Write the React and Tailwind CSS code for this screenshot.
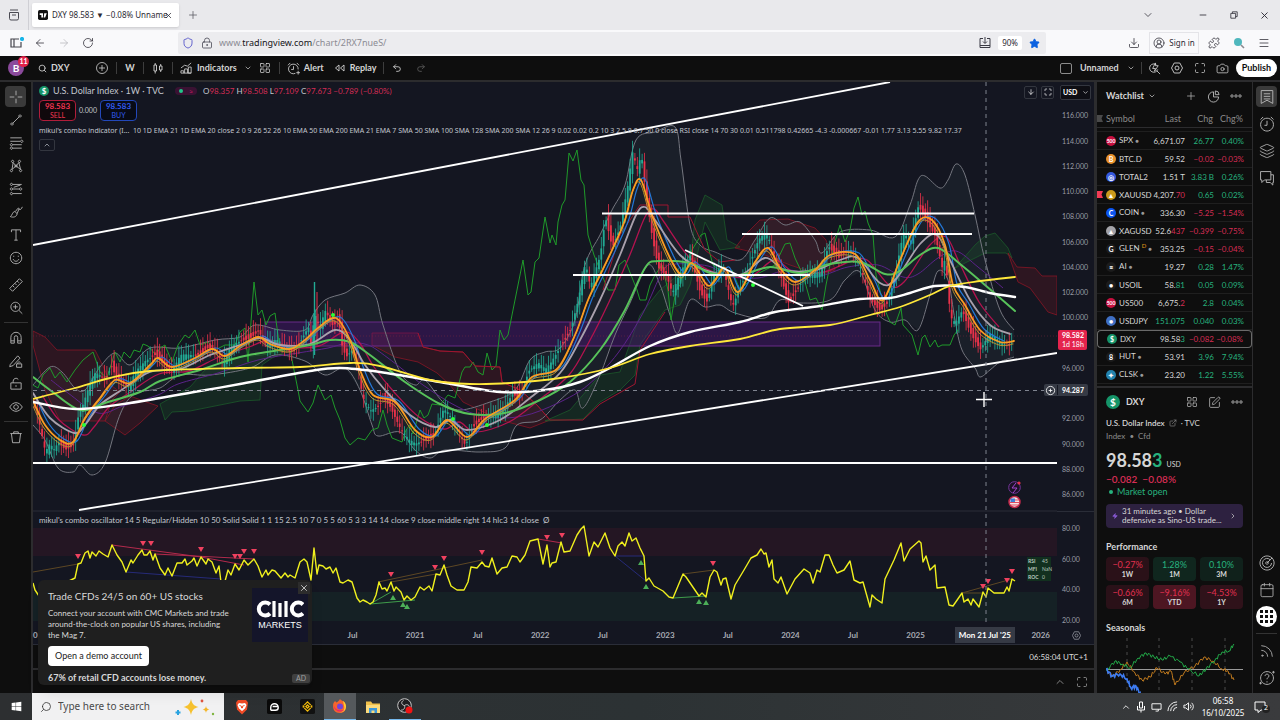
import {
  ArrowDown,
  ArrowLeft,
  ArrowRight,
  Calendar,
  Camera,
  ChevronDown,
  ChevronRight,
  ChevronUp,
  CircleUserRound,
  Download,
  ExternalLink,
  Layers,
  LayoutGrid,
  LockKeyhole,
  Maximize,
  Menu,
  Minus,
  Plus,
  Puzzle,
  Redo2,
  RotateCw,
  Rss,
  Search,
  Shield,
  SquarePen,
  Star,
  Undo2,
  X,
  Zap,
} from "lucide-react";
import { FaWindows } from "react-icons/fa";

const toPoints = (str) => str.split(" ").map((p) => p.split(",").map(Number));

const shift = (points, dx, dy) => points.map(([x, y]) => [x + dx, y + dy]);

// Catmull-Rom spline through the points
const smooth = (points) => {
  let d = `M${points[0][0]},${points[0][1]}`;
  for (let i = 0; i < points.length - 1; i++) {
    const p0 = points[i - 1] || points[i];
    const p1 = points[i];
    const p2 = points[i + 1];
    const p3 = points[i + 2] || p2;
    d += `C${p1[0] + (p2[0] - p0[0]) / 6},${p1[1] + (p2[1] - p0[1]) / 6} ${p2[0] - (p3[0] - p1[0]) / 6},${
      p2[1] - (p3[1] - p1[1]) / 6
    } ${p2[0]},${p2[1]}`;
  }
  return d;
};

const price = toPoints(
  "33,402 38,420 45,455 50,445 53,452 58,442 65,447 73,443 78,415 83,405 90,385 95,375 105,378 112,362 115,375 122,382 128,388 135,375 145,362 155,352 163,362 172,372 180,358 195,355 208,345 215,350 222,365 230,350 240,340 250,335 258,330 265,345 278,342 288,350 295,348 303,335 308,328 311,350 314,315 319,330 325,312 333,325 338,315 342,345 346,355 352,350 358,370 362,400 370,412 378,405 383,395 390,405 400,430 408,442 415,445 425,438 433,435 443,410 448,415 455,430 465,445 472,425 480,418 495,415 505,408 512,393 520,395 528,370 538,365 545,372 550,365 560,345 570,328 578,300 585,265 590,290 600,255 605,215 612,245 620,225 627,190 632,155 637,172 641,155 645,190 652,235 658,265 666,275 672,295 680,275 690,255 700,290 707,300 713,275 722,268 732,308 740,285 750,260 758,240 765,235 770,245 780,275 788,300 795,290 805,275 820,275 828,245 838,255 850,250 860,270 870,300 880,308 888,300 896,270 903,235 910,245 918,205 925,215 930,225 935,235 942,270 945,260 950,320 955,325 962,310 970,330 980,348 990,335 1000,345 1010,345 1014,332"
);

const white = toPoints(
  "33,402 76,409 130,403 200,391 240,384 310,371 340,368 380,372 440,382 500,392 545,390 580,382 610,368 650,346 690,332 740,322 775,312 820,306 860,299 890,298 910,293 935,286 965,287 990,293 1015,297"
);
const yellow = toPoints(
  "33,399 75,388 110,378 150,371 240,368 300,367 350,363 380,366 430,380 470,384 510,383 560,378 610,368 650,354 690,346 740,339 780,329 830,325 870,315 900,307 930,295 950,286 980,281 1015,277"
);
const green = toPoints(
  "33,377 50,390 80,410 105,403 140,392 160,381 200,370 240,357 280,350 310,345 330,340 350,342 370,355 405,382 440,404 470,414 505,413 540,400 570,382 600,350 625,310 645,268 658,261 690,263 710,273 740,275 770,267 800,273 830,264 860,262 885,274 900,271 920,255 938,248 960,264 985,285 1015,311"
);
const gray = toPoints(
  "33,393 50,418 74,433 85,425 100,405 120,391 150,372 180,369 210,355 240,345 260,338 280,345 310,344 335,330 350,340 365,365 385,390 410,415 435,427 450,420 467,430 500,420 530,398 560,373 580,340 600,300 620,255 636,215 645,207 655,220 680,255 705,270 740,275 765,258 785,270 815,270 840,260 858,258 880,283 895,280 920,244 937,235 950,260 970,300 990,325 1010,334"
);
const orange = toPoints(
  "33,401 45,425 60,440 73,442 85,418 100,398 115,380 130,383 150,365 158,358 172,367 195,358 212,349 225,356 240,346 258,337 270,344 290,349 305,340 318,328 336,318 350,340 360,370 373,395 395,402 415,430 432,437 447,420 467,437 485,419 515,400 532,377 557,369 575,335 588,300 600,275 612,250 625,220 633,190 641,180 652,215 670,258 682,275 692,263 707,285 715,280 725,268 738,292 755,262 768,248 780,268 795,282 815,270 830,255 855,254 870,280 883,300 900,260 918,222 932,220 945,245 953,285 965,305 980,330 1000,342 1014,341"
);
const bandTop = toPoints(
  "33,385 50,367 62,372 75,388 85,390 100,367 115,353 130,365 150,348 180,348 215,340 240,337 255,325 280,330 305,330 313,315 325,300 345,293 360,285 375,295 383,325 400,372 415,385 425,380 443,402 460,410 490,402 515,390 530,360 545,352 560,348 575,320 585,265 600,235 612,210 625,185 636,140 655,132 675,127 681,160 690,225 700,245 715,252 740,260 755,240 770,218 785,225 800,222 815,240 822,253 840,232 870,230 895,237 910,205 918,180 925,176 940,188 948,180 956,164 965,175 975,215 985,260 1000,310 1014,330"
);
const bandBottom = toPoints(
  "33,425 45,440 58,468 73,472 80,465 92,475 105,463 118,420 128,400 140,392 160,388 180,375 210,375 250,368 275,355 305,361 325,375 345,368 360,390 372,425 378,436 400,432 415,450 430,458 445,450 480,452 505,448 517,425 540,420 560,400 575,390 583,408 600,375 615,335 630,303 648,265 660,285 670,315 678,333 690,300 705,307 720,305 735,313 765,318 780,300 800,303 830,300 845,280 860,272 875,310 890,322 905,320 918,330 930,295 938,271 948,280 955,320 962,350 975,368 980,377 990,370 1000,362 1014,357"
);
const lagging =
  "33,385 38,388 43,375 50,368 55,378 60,372 67,382 75,370 83,360 93,352 100,372 107,378 115,352 120,362 124,352 130,358 134,350 140,352 143,344 148,346 156,355 160,348 165,345 172,362 178,345 185,335 189,338 195,330 200,345 208,342 215,350 225,345 235,345 240,332 245,328 248,362 254,282 258,315 262,310 266,325 270,316 275,313 280,350 290,350 298,390 300,401 308,412 313,403 318,385 325,400 331,395 335,408 340,420 345,438 350,445 358,438 365,440 372,430 378,428 383,410 387,425 392,438 402,442 406,430 410,425 413,434 420,410 424,418 428,415 432,404 440,405 448,395 455,398 462,372 465,367 470,367 473,362 478,372 483,375 487,353 492,370 496,366 500,330 504,340 508,335 515,300 523,260 528,295 531,292 535,262 539,258 545,217 550,243 552,235 556,245 558,222 562,205 565,200 569,153 573,161 577,150 581,180 584,185 588,235 594,255 600,270 608,290 615,290 619,265 625,260 637,290 640,300 646,300 650,285 655,275 662,265 668,290 671,320 676,290 680,285 686,262 692,250 701,235 705,233 709,250 713,265 725,275 732,270 740,290 755,275 775,265 785,244 790,243 795,258 803,275 810,300 816,298 822,310 826,285 830,265 834,245 840,225 845,242 850,230 854,208 858,197 862,215 865,211 868,223 873,235 876,275 885,310 890,322 895,325 901,308 903,325 912,335 918,355 922,338 925,335 930,347 935,340 938,347 942,345 950,345 954,335 958,330";

const oscillator =
  "33,583 35,590 39,596 75,578 78,564 81,563 85,553 88,551 90,558 92,552 96,556 99,551 103,554 108,557 112,545 117,555 122,562 126,572 131,560 133,563 138,555 142,550 144,555 147,555 150,551 153,560 155,554 160,568 165,575 168,568 172,576 177,563 182,563 185,559 187,565 192,561 194,558 197,566 201,557 206,564 208,559 212,562 216,573 219,566 221,582 224,585 228,570 231,575 235,564 239,570 244,560 248,565 254,559 258,566 262,577 266,570 268,575 272,570 275,571 281,578 285,573 288,577 290,575 295,578 300,562 304,559 307,562 311,580 314,548 317,574 319,565 323,566 326,569 330,567 333,573 336,568 340,582 343,583 348,580 352,582 357,598 360,602 363,600 367,602 370,604 373,602 376,595 379,582 382,589 385,588 387,591 391,582 394,591 396,587 401,592 404,600 407,596 411,600 415,597 420,587 424,590 429,586 432,591 436,574 440,575 444,565 447,575 451,586 457,590 464,590 468,582 471,567 477,568 482,562 485,566 489,567 492,558 497,574 502,568 507,567 512,556 517,557 520,562 525,555 530,541 538,539 543,564 547,545 550,567 552,563 556,562 561,542 564,552 570,551 577,535 581,529 584,526 589,556 594,542 598,547 605,533 610,548 615,556 618,546 622,542 625,546 629,533 632,541 636,538 640,548 644,556 646,581 649,578 654,586 663,591 669,597 673,598 683,574 686,577 699,596 702,593 706,597 710,577 714,570 717,572 721,585 723,579 726,578 731,599 735,585 744,570 751,558 757,555 761,549 764,554 766,553 769,567 772,560 774,579 778,583 781,577 787,594 795,579 804,569 810,573 813,583 817,570 820,572 825,555 829,555 833,565 837,573 844,570 850,561 854,580 860,583 863,582 870,607 872,595 876,599 882,603 885,579 894,560 901,543 904,561 910,549 919,541 921,543 923,562 926,556 930,570 935,565 937,588 945,587 949,605 953,606 962,593 964,602 968,599 971,605 973,599 979,607 983,592 986,597 988,588 994,593 1004,593 1007,587 1009,591 1012,579 1015,581";

const sellMarks = toPoints(
  "78,556 143,543 151,543 201,549 235,556 240,556 244,551 254,551 391,574 435,567 444,558 482,552 547,537 562,535 713,563 983,586 988,581 1007,580 1012,571"
);
const buyMarks = toPoints("393,598 403,605 407,607 641,563 646,587 699,602 706,603");

const priceAt = (x) => {
  const i = Math.max(1, price.findIndex((p) => p[0] >= x));
  const [x0, y0] = price[i - 1];
  const [x1, y1] = price[i];
  return y0 + ((y1 - y0) * (x - x0)) / (x1 - x0 || 1);
};

// Weekly candles around the price path
const candles = [];
for (let i = 0; i < 408; i++) {
  const x = 34.5 + i * 2.4;
  const noise = Math.sin(i * 12.9) * 5;
  const open = priceAt(x - 2.4 > 33 ? x - 2.4 : 33) + noise * 0.6;
  const close = priceAt(Math.min(x, 1013)) - noise * 0.6;
  const wick = 3 + Math.abs(Math.sin(i * 7.3)) * 9;
  candles.push({ x, open, close, high: Math.min(open, close) - wick, low: Math.max(open, close) + wick * 0.8 });
}

const clouds = [
  { up: false, d: "M33,331L45,337 57,350 95,350 103,366 112,386 120,392 112,400 105,421 60,421 45,390 33,345Z" },
  { up: false, d: "M105,421L125,435 140,423 158,406 152,404 130,396 115,405Z" },
  { up: true, d: "M160,404L190,387 205,370 230,358 262,355 290,350 272,358 262,365 260,400 240,401 190,411 172,412 165,420Z" },
  { up: false, d: "M372,333L418,333 423,347 440,351 463,352 475,366 500,367 502,382 520,390 537,405 550,420 530,428 500,420 463,402 450,385 437,373 418,362 395,357 372,345Z" },
  { up: true, d: "M545,421L570,410 600,375 620,372 640,315 660,290 690,265 695,220 705,195 722,205 727,240 740,247 720,250 705,222 690,285 680,305 665,310 640,345 635,375 620,390 600,402 583,419Z" },
  { up: false, d: "M735,248L745,235 760,220 788,219 815,228 826,240 835,270 820,275 790,265 765,255Z" },
  { up: true, d: "M955,268L975,245 985,236 995,233 1008,248 1012,258 1006,253 985,253Z" },
  { up: false, d: "M1008,253L1017,267 1035,268 1042,276 1057,276 1057,315 1048,312 1030,288 1018,282Z" },
];

const ChartCanvas = () => (
  <svg viewBox="33 82 1024 544" preserveAspectRatio="none" className="block h-full w-full">
    <rect x="33" y="528" width="1024" height="28" fill="#241623" />
    <rect x="33" y="592" width="1024" height="29" fill="#152125" />
    <path d="M33,511H1057" stroke="#2a2d38" />

    <path
      d={`${smooth(bandTop)}L${[...bandBottom].reverse().map((p) => p.join(",")).join(" ")}Z`}
      fill="#8fb7ab"
      fillOpacity=".06"
    />
    {clouds.map(({ up, d }) => (
      <path
        key={d}
        d={d}
        fill={up ? "#1b6b2b" : "#8a1626"}
        fillOpacity=".22"
        stroke={up ? "#1c5c2b" : "#8f1526"}
        strokeOpacity=".75"
      />
    ))}
    <rect x="265" y="322" width="615" height="24" fill="#5a1787" fillOpacity=".36" stroke="#692a88" />
    <path d="M33,336H1057" stroke="#7c2940" strokeDasharray="1 2" opacity=".5" />

    <g fill="none" strokeWidth="1">
      <path d={smooth(bandTop)} stroke="#74767f" />
      <path d={smooth(bandBottom)} stroke="#74767f" />
      <polyline points={lagging} stroke="#1f9a2a" strokeLinejoin="round" />
      <path d="M418,333L423,347 440,351 463,352 475,366 500,367 502,382 520,390 537,405 550,420H583L600,404 635,384 640,350 665,312" stroke="#9d1630" />
      <path d="M603,290L620,235 640,205H668V217H690L705,250 720,262 735,260" stroke="#9d1630" />
      <path d={smooth(shift(green, 18, 3).slice(0, -1))} stroke="#5b2389" />
      <path d={smooth(shift(gray, 9, 2).slice(0, -1))} stroke="#b3134f" strokeWidth="1.3" />
    </g>

    {candles.map((c) => {
      const color = c.close < c.open ? "#22ab94" : "#e8324a";
      return (
        <g key={c.x} fill={color}>
          <rect x={c.x} y={c.high} width=".8" height={c.low - c.high} />
          <rect
            x={c.x - 0.5}
            y={Math.min(c.open, c.close)}
            width="1.8"
            height={Math.max(1, Math.abs(c.close - c.open))}
          />
        </g>
      );
    })}
    <path d="M314.500,282V355" stroke="#22ab94" strokeWidth="1.400" />
    <path d="M317,292V345" stroke="#e8324a" />

    <g fill="none" strokeLinecap="round">
      <path d={smooth(shift(orange, 4, -1).slice(0, -1))} stroke="#2478d8" strokeWidth="1.2" />
      <path d={smooth(gray)} stroke="#a9a1ad" strokeWidth="1.800" />
      <path d={smooth(green)} stroke="#57c25a" strokeWidth="2" />
      <path d={smooth(shift(orange, -1, 3))} stroke="#b89330" strokeWidth="1" />
      <path d={smooth(orange)} stroke="#fb9c22" strokeWidth="1.800" />
      <path d={smooth(white)} stroke="#fff" strokeWidth="2.400" />
      <path d={smooth(yellow)} stroke="#ffe83b" strokeWidth="1.800" />
    </g>
    <g fill="#2bff3a">
      <circle cx="84" cy="425" r="2" />
      <circle cx="333" cy="315" r="2" />
      <circle cx="453" cy="419" r="2" />
      <circle cx="487" cy="425" r="2" />
      <circle cx="753" cy="285" r="2" />
    </g>

    <g stroke="#fff" strokeWidth="1.800" fill="none">
      <path d="M33,245L890,82" />
      <path d="M79,510L1057,353" />
      <path d="M33,463H1057" />
      <path d="M602,213.500H974" />
      <path d="M742,234H972" />
      <path d="M573,275H810" />
      <path d="M685,250L803,306" />
    </g>

    <g fill="none">
      <path d="M33,572L78,564M378,582L482,560M391,582L436,574M683,574L714,570M962,593L1012,579M962,593H983" stroke="#5d4724" />
      <path d="M112,545L201,557M155,554L254,559M201,557L244,565M538,539L562,543" stroke="#b32a4c" />
      <path d="M126,572L221,579M615,556H644M615,556L646,581" stroke="#262a78" />
      <path d="M370,604L391,592M370,604L415,600M673,598L706,596" stroke="#3f9c4b" />
      <polyline points={oscillator} stroke="#f0f01e" strokeWidth="1.400" strokeLinejoin="round" />
    </g>
    {sellMarks.map(([x, y]) => (
      <path key={x} d={`M${x - 3},${y - 2}h6l-3,5z`} fill="#f0415f" />
    ))}
    {buyMarks.map(([x, y]) => (
      <path key={x} d={`M${x - 3},${y + 2}h6l-3,-5z`} fill="#4caf58" />
    ))}

    <g stroke="#7f838f" strokeDasharray="4 4">
      <path d="M33,390.500H1044" />
      <path d="M986,82V626" />
    </g>
    <path d="M984,392V407M976,399.500H992" stroke="#fff" strokeWidth="1.400" />

    <circle cx="1014.500" cy="487.500" r="5.800" fill="#1b1226" stroke="#74359a" />
    <path d="M1016,483l-4,5h5l-4,5" stroke="#a345cf" fill="none" />
    <circle cx="1019" cy="483" r="1.600" fill="#e8324a" />
    <circle cx="1014.500" cy="502" r="5.500" fill="#f4e6e8" stroke="#c1284a" strokeWidth="1.500" />
    <path d="M1010,502.500h9M1011,505h7M1014,500h5" stroke="#e04a5e" strokeWidth="1.200" />
    <rect x="1010.500" y="498.500" width="4.500" height="3.500" fill="#3f7fd6" />
  </svg>
);

// Drawing tools, on a 28 unit grid
const toolIcons = {
  Cross: <path d="M14 3v8M14 17v8M3 14h8M17 14h8" />,
  "Trend line": <path d="M8 20L20 8M7 19a2 2 0 1 0 .1 0zM21 5a2 2 0 1 0 .1 0z" />,
  Fibonacci: <path d="M4 5h20M4 11h17M8 17h16M8 23h16M24 9a2 2 0 1 0 .1 0zM6 15a2 2 0 1 0 .1 0zM6 21a2 2 0 1 0 .1 0z" />,
  Patterns: (
    <path d="M7 20L9 8l5 6 5-6 3 12M7 20l7-6 8 6M6 20a2 2 0 1 0 .1 0zM8 4a2 2 0 1 0 .1 0zM20 4a2 2 0 1 0 .1 0zM22 20a2 2 0 1 0 .1 0zM14 12a2 2 0 1 0 .1 0z" />
  ),
  Forecasting: <path d="M8 6h16M8 14h12M8 22h16M6 4a2 2 0 1 0 .1 0zM6 12a2 2 0 1 0 .1 0zM6 20a2 2 0 1 0 .1 0zM22 12a2 2 0 1 0 .1 0zM10 11l12-4" />,
  Brush: <path d="M4 22c5 2 11 1 12-5l-4-4c-5 1-4 7-8 9zM13 13l4-5c1-2 3-1 2 1l-3 8M19 9c2 2 5 0 6-4" />,
  Text: <path d="M6 9V5h16v4M14 5v18M11 23h6" />,
  Icons: <path d="M14 4a10 10 0 1 0 .1 0zM9 16c2 5 8 5 10 0M10 10v2M18 10v2" />,
  Measure: <path d="M3 20L20 3l5 5L8 25zM8 15l3 3M12 11l3 3M16 7l3 3" />,
  "Zoom in": <path d="M13 4a8 8 0 1 0 .1 0zM19 18l6 6M13 8v8M9 12h8" />,
  Magnet: <path d="M5 23V13a9 9 0 0 1 18 0v10h-6V13a3 3 0 0 0-6 0v10zM5 19h6M17 19h6" />,
  "Stay in drawing mode": <path d="M4 20L17 5l4 4L9 22l-6 2zM15 19h9v6h-9zM17 19v-2a3 3 0 0 1 5 0" />,
  "Lock drawings": <path d="M5 12h18v11H5zM9 12V9a5 5 0 0 1 9-3M14 16v3" />,
  "Hide drawings": <path d="M3 14c6-10 16-10 22 0-6 10-16 10-22 0zM14 10a4 4 0 1 0 .1 0z" />,
  Remove: <path d="M4 8h20M10 8V5h8v3M6 8l2 16h12l2-16" />,
};

const ToolIcon = ({ name }) => (
  <svg viewBox="0 0 28 28" className="size-4" fill="none" stroke="currentColor" strokeWidth="1.600">
    {toolIcons[name]}
  </svg>
);

const ToolButton = ({ name, active }) => (
  <button
    aria-label={name}
    className={`flex size-[21px] shrink-0 items-center justify-center rounded ${
      active ? "bg-[#3a3a3a]" : ""
    }`}
  >
    <ToolIcon name={name} />
  </button>
);

const DrawingToolbar = () => (
  <aside className="flex w-[33px] shrink-0 flex-col items-center gap-0.5 border-r-2 border-[#2c2c2e] bg-[#0e0e0e] pt-1 text-[#b2b2b2]">
    {Object.keys(toolIcons).slice(0, 8).map((name, i) => (
      <ToolButton key={name} name={name} active={i === 0} />
    ))}
    <div className="h-0.5" />
    <ToolButton name="Measure" />
    <ToolButton name="Zoom in" />
    <div className="my-0.5 h-px w-6 bg-[#333]" />
    <ToolButton name="Magnet" />
    <ToolButton name="Stay in drawing mode" />
    <ToolButton name="Lock drawings" />
    <ToolButton name="Hide drawings" />
    <div className="my-0.5 h-px w-6 bg-[#333]" />
    <ToolButton name="Remove" />
  </aside>
);

const BrowserBar = () => (
  <header className="shrink-0 bg-[#e9e9ec] font-['Noto_Sans',sans-serif] text-[#2b2a33]">
    <div className="flex h-[30px] items-center">
      <div className="flex h-full w-[29px] items-center justify-center border-r border-[#cfcfd4]">
        <svg viewBox="0 0 12 12" className="size-3" fill="none" stroke="#4a4a52">
          <path d="M2 1h8M1.500 3.500h9v6a1.500 1.500 0 0 1-1.500 1.500H3a1.500 1.500 0 0 1-1.500-1.500zM4 6h4" />
        </svg>
      </div>
      <div className="ml-[3px] flex h-6 w-[147px] shrink-0 items-center rounded-xs bg-white px-1.5 shadow-sm">
        <svg viewBox="0 0 12 12" className="size-[10px] shrink-0">
          <rect width="12" height="12" rx="2" fill="#111" />
          <path d="M2 4h4v5H4V6H2zM7.500 4h3L8.600 9H6.800z" fill="#fff" />
        </svg>
        <span className="ml-1 min-w-0 flex-1 text-[8px] whitespace-nowrap">DXY 98.583 ▼ −0.08% Unname</span>
        <button aria-label="Close tab">
          <X className="size-[9px]" />
        </button>
      </div>
      <button aria-label="New tab" className="ml-2">
        <Plus className="size-3 text-[#55555e]" strokeWidth={1.5} />
      </button>
      <div className="ml-auto flex items-center">
        <ChevronDown className="mr-[33px] size-3" strokeWidth={1.5} />
        <button aria-label="Minimize" className="flex w-[31px] justify-center">
          <Minus className="size-[10px]" />
        </button>
        <button aria-label="Restore" className="flex w-[31px] justify-center">
          <svg viewBox="0 0 10 10" className="size-2" fill="none" stroke="currentColor">
            <path d="M1 3h6v6H1zM3 3V1h6v6H7" />
          </svg>
        </button>
        <button aria-label="Close window" className="flex w-[31px] justify-center">
          <X className="size-[11px]" />
        </button>
      </div>
    </div>
    <div className="flex h-[26px] items-center bg-[#f9f9fb]">
      <div className="flex w-[178px] items-center pl-[10px]">
        <svg viewBox="0 0 14 12" className="h-3 w-[14px]" fill="none" stroke="#45454d" strokeWidth="1.200">
          <path d="M9 2H1v8h10V5M4 2v8" />
          <circle cx="12" cy="2" r="1.500" fill="#19b5e8" stroke="#19b5e8" />
        </svg>
        <ArrowLeft className="ml-[10px] size-3" strokeWidth={1.5} />
        <ArrowRight className="ml-3 size-3 text-[#b5b5bb]" strokeWidth={1.5} />
        <RotateCw className="ml-3 size-3" strokeWidth={1.5} />
      </div>
      <div className="flex h-[22px] min-w-0 flex-1 items-center rounded-xs bg-[#ececef] pl-1">
        <Shield className="size-3 text-[#5555c9]" strokeWidth={1.8} />
        <LockKeyhole className="ml-[7px] size-3 text-[#5b5b66]" strokeWidth={1.8} />
        <div className="ml-1.5 min-w-0 flex-1 truncate text-[9px] text-[#8b8b93]">
          www.<span className="text-[#15141a]">tradingview.com</span>/chart/2RX7nueS/
        </div>
        <svg viewBox="0 0 12 12" className="size-3" fill="none" stroke="#3b3b44">
          <path d="M1 1.500h3M8 1.500h3M1 1.500v9h10v-9M1 8.500h10M6 0v6M4 4.500l2 2 2-2" />
        </svg>
        <span className="mx-[7px] rounded-xs bg-white px-1 text-[8px] leading-[14px]">90%</span>
        <Star className="mr-1.5 size-[11px] fill-[#0b61e0] text-[#0b61e0]" />
      </div>
      <div className="ml-[82px] flex items-center gap-[13px]">
        <Download className="size-3" strokeWidth={1.5} />
        <button className="-mx-1 flex h-[22px] w-[50px] items-center justify-center gap-1 border border-[#e4e4e8] text-[8px] whitespace-nowrap">
          <CircleUserRound className="size-3 shrink-0" strokeWidth={1.5} />
          Sign in
        </button>
        <Puzzle className="size-3" strokeWidth={1.5} />
        <svg viewBox="0 0 12 12" className="size-3">
          <circle cx="5" cy="5" r="4" fill="#4fb7bd" />
          <path d="M8 8l3 3" stroke="#8a8a90" strokeWidth="1.600" />
        </svg>
        <Menu className="mr-[10px] size-3" strokeWidth={1.5} />
      </div>
    </div>
  </header>
);

const Divider = () => <div className="h-3 w-px bg-[#3d3d3d]" />;

const TopToolbar = () => (
  <div className="flex h-[26px] shrink-0 items-center border-b-2 border-[#2c2c2e] bg-[#0e0e0e] text-[9px] font-bold text-[#d4d4d4]">
    <div className="relative ml-2 flex size-4 items-center justify-center rounded-full bg-[#8b4a9c] text-[10px] text-white">
      B
      <span className="absolute -top-1 left-2.5 flex size-[11px] items-center justify-center rounded-full bg-[#e0224a] text-[7px]">
        11
      </span>
    </div>
    <button className="ml-3.5 flex w-[58px] items-center gap-1">
      <Search className="size-[9px]" strokeWidth={2.2} />
      DXY
    </button>
    <button aria-label="Compare" className="mr-2">
      <svg viewBox="0 0 12 12" className="size-3" fill="none" stroke="currentColor" strokeWidth=".800">
        <circle cx="6" cy="6" r="5.500" />
        <path d="M6 3v6M3 6h6" />
      </svg>
    </button>
    <Divider />
    <button className="w-[26px] text-center">W</button>
    <Divider />
    <button aria-label="Chart type" className="flex w-7 justify-center">
      <svg viewBox="0 0 10 12" className="h-3 w-[10px]" fill="none" stroke="currentColor" strokeWidth=".900">
        <path d="M1 3h2.500v6H1zM2.200 1v2M2.200 9v2.500M6.500 4H9v4H6.500zM7.700 2v2M7.700 8v2" />
      </svg>
    </button>
    <Divider />
    <button className="ml-[7px] flex items-center gap-1">
      <svg viewBox="0 0 14 12" className="h-3 w-[13px]" fill="none" stroke="currentColor" strokeWidth=".900">
        <path d="M1 11.500V9h3v2.500M5 11.500V7h3v4.500M9 11.500V5h3v6.500zM1 11.500h11M1 6l4-3 3 1 4-3.500" />
      </svg>
      Indicators
    </button>
    <ChevronDown className="mx-[7px] size-2" />
    <LayoutGrid className="mr-2 size-3" strokeWidth={1.5} />
    <Divider />
    <button className="ml-[7px] flex items-center gap-1">
      <AlarmIcon className="size-[13px]" />
      Alert
    </button>
    <button className="ml-2.5 flex items-center gap-1">
      <svg viewBox="0 0 12 10" className="h-[10px] w-3" fill="none" stroke="currentColor" strokeWidth=".900">
        <path d="M5 2v6L1.500 5zM10 2v6L6.500 5z" />
      </svg>
      Replay
    </button>
    <div className="ml-1.5">
      <Divider />
    </div>
    <Undo2 className="ml-2 size-[10px]" />
    <Redo2 className="ml-3.5 size-[10px] text-[#5c5c5c]" />
    <div className="ml-auto flex items-center">
      <input type="checkbox" aria-label="Layout" className="h-[11px] w-3 appearance-none rounded-xs border border-[#8b8b8b]" />
      <button className="ml-2 flex items-center gap-2">
        Unnamed
        <ChevronDown className="size-2" />
      </button>
      <div className="ml-1.5">
        <Divider />
      </div>
      <svg viewBox="0 0 14 14" className="ml-1.5 size-[13px]" fill="none" stroke="currentColor" strokeWidth=".900">
        <path d="M9 3a4.500 4.500 0 1 0 1.500 5M9.500 9.500L13 13M8 1L5 7h3L7 10l4-6H8z" />
      </svg>
      <HexGear className="ml-2.5 size-3" />
      <Maximize className="ml-[11px] size-3" strokeWidth={1.5} />
      <Camera className="ml-2.5 size-[13px]" strokeWidth={1.4} />
      <button className="mr-[3px] ml-[7px] h-[18px] rounded-full bg-white px-1.5 text-[9px] text-[#0e0e0e]">Publish</button>
    </div>
  </div>
);

const AlarmIcon = ({ className }) => (
  <svg viewBox="0 0 14 14" className={className} fill="none" stroke="currentColor" strokeWidth=".900">
    <path d="M9 12.200A5.200 5.200 0 1 1 12 8M7 4.500V8H4.500M1 3.500L3.500 1M13 3.500L10.500 1M12 9.500v4M10 11.500h4" />
  </svg>
);

const HexGear = ({ className }) => (
  <svg viewBox="0 0 12 12" className={className} fill="none" stroke="currentColor" strokeWidth=".900">
    <path d="M3.200 1h5.600l2.700 5-2.700 5H3.200L.500 6z" />
    <circle cx="6" cy="6" r="2" />
  </svg>
);

const Legend = () => (
  <div className="absolute inset-x-0 top-0 pl-1.5 text-[#c3c6ce]">
    <div className="flex h-[18px] items-center text-[9px] whitespace-nowrap">
      <DollarBadge className="mr-1 size-[10px] text-[8px]" />
      <span className="w-[116px]">U.S. Dollar Index · 1W · TVC</span>
      <span className="mx-1.5 flex h-2 w-[22px] items-center justify-between rounded-full bg-[#3a1233] px-1">
        <i className="size-1 rounded-full bg-[#22c58b]" />
        <i className="text-[7px] text-[#d01a65] not-italic">≈</i>
      </span>
      <span className="flex gap-0.5 text-[8px] text-[#d32c55]">
        <span><span className="text-[#c3c6ce]">O</span>98.357</span>
        <span><span className="text-[#c3c6ce]">H</span>98.508</span>
        <span><span className="text-[#c3c6ce]">L</span>97.109</span>
        <span><span className="text-[#c3c6ce]">C</span>97.673</span>
        <span>−0.789 (−0.80%)</span>
      </span>
    </div>
    <div className="flex items-center text-center text-[8px]">
      <button className="h-[21px] w-[37px] rounded border border-[#b01d3a] bg-[#10080c] leading-[9px] text-[#ef3450]">
        <b className="block">98.583</b>
        <span className="block text-[7px] leading-[8px]">SELL</span>
      </button>
      <span className="w-6 text-[7px]">0.000</span>
      <button className="h-[21px] w-[37px] rounded border border-[#2348ba] bg-[#080b16] leading-[9px] text-[#315bf2]">
        <b className="block">98.583</b>
        <span className="block text-[7px] leading-[8px]">BUY</span>
      </button>
    </div>
    <p className="mt-0.5 font-['Noto_Sans',sans-serif] text-[7px] leading-4 whitespace-nowrap">
      mikul's combo indicator (I...&nbsp; 10 1D EMA 21 1D EMA 20 close 2 0 9 26 52 26 10 EMA 50 EMA 200 EMA 21 EMA 7 SMA
      50 SMA 100 SMA 128 SMA 200 SMA 12 26 9 0.02 0.02 0.2 10 3 2 5 8 0.7 50 0 close RSI close 14 70 30 0.01 0.511798
      0.42665 -4.3 -0.000667 -0.01 1.77 3.13 5.55 9.82 17.37
    </p>
    <button aria-label="Collapse legend" className="flex h-3 w-4 items-center justify-center rounded-xs border border-[#33363f]">
      <ChevronUp className="size-2" />
    </button>
  </div>
);

const DollarBadge = ({ className }) => (
  <span className={`flex shrink-0 items-center justify-center rounded-full bg-[#159468] font-bold text-white ${className}`}>$</span>
);

const PriceAxis = () => (
  <div className="grid w-[37px] shrink-0 grid-rows-[429fr_115fr] text-[7px] text-[#9a9da6]">
    <div className="relative grid auto-rows-fr items-center pt-[21px] pb-1 pl-[5px]">
      {[116, 114, 112, 110, 108, 106, 104, 102, 100, 0, 96, 0, 92, 90, 88, 86].map((p, i) => (
        <span key={i}>{p ? `${p}.000` : ""}</span>
      ))}
      <div className="absolute top-[248px] left-px w-[29px] rounded-xs bg-[#e5234d] py-px pl-1 leading-[9px] text-white">
        <b className="block">98.582</b>
        1d 18h
      </div>
      <div className="absolute top-[302px] -left-[13px] flex h-3 items-center rounded-xs bg-[#363a45] font-bold text-white">
        <svg viewBox="0 0 12 12" className="mx-px size-[11px]" fill="none" stroke="currentColor" strokeWidth=".900">
          <circle cx="6" cy="6" r="4.500" />
          <path d="M6 4v4M4 6h4" />
        </svg>
        <span className="border-l border-[#151722] px-1">94.287</span>
      </div>
      <div className="absolute top-0.5 right-[3px] flex h-4 items-center gap-1">
        <button aria-label="Scroll" className="flex size-[13px] shrink-0 items-center justify-center rounded-xs border border-[#33363f] text-white">
          <ArrowDown className="size-2" />
        </button>
        <button aria-label="Reset" className="mr-0.5 flex size-[13px] shrink-0 items-center justify-center rounded-xs border border-[#33363f] text-white">
          <Maximize className="size-2" />
        </button>
        <div className="relative">
          <select
            aria-label="Currency"
            className="block h-[15px] w-[31px] appearance-none rounded-xs border border-[#33363f] bg-[#0e0e14] pl-0.5 text-[7px] font-bold text-white"
          >
            <option>USD</option>
          </select>
          <ChevronDown className="pointer-events-none absolute top-1 right-0.5 size-[7px] text-white" />
        </div>
      </div>
    </div>
    <div className="flex flex-col justify-between border-t border-[#2a2d38] pt-[10px] pl-[5px] leading-3">
      <span>80.00</span>
      <span>60.00</span>
      <span>40.00</span>
      <span>20.00</span>
    </div>
  </div>
);

const months = ["", "", "", "", "Jul", "2021", "Jul", "2022", "Jul", "2023", "Jul", "2024", "Jul", "2025", "", "2026"];

const Chart = () => (
  <section className="relative flex min-w-0 flex-1 flex-col bg-[#0e0e0e]">
    <div className="flex min-h-0 flex-1 bg-[#141621]">
      <div className="relative min-w-0 flex-1">
        <div className="absolute inset-0">
          <ChartCanvas />
        </div>
        <Legend />
        <p className="absolute top-[431px] left-1.5 text-[8px] leading-[14px] whitespace-nowrap text-[#c3c6ce]">
          mikul's combo oscillator 14 5 Regular/Hidden 10 50 Solid Solid 1 1 15 2.5 10 7 0 5 5 60 5 3 3 14 14 close 9
          close middle right 14 hlc3 14 close &nbsp;Ø
        </p>
        <div className="absolute top-[475px] right-1.5 grid w-6 grid-cols-[14px_10px] bg-[#12301f] px-px text-[5px] leading-2 text-[#b9c9bf]">
          <b>RSI</b>
          <span>45</span>
          <b>MFI</b>
          <span>NaN</span>
          <b>ROC</b>
          <span>0</span>
        </div>
      </div>
      <PriceAxis />
    </div>
    <div className="relative flex h-[19px] shrink-0 items-center border-b border-[#2a2d38] bg-[#141621] text-center text-[8px] font-bold text-[#a9acb5]">
      <span className="w-[38px] text-left">0</span>
      {months.map((m, i) => (
        <span key={i} className="flex-1">
          {m}
        </span>
      ))}
      <span className="absolute right-[79px] flex h-4 items-center bg-[#363a45] px-1 text-white">Mon 21 Jul '25</span>
      <span className="w-[22px]">
        <HexGear className="size-[9px]" />
      </span>
    </div>
    <div className="flex h-[25px] shrink-0 items-center justify-end border-b-2 border-[#2c2c2e] pr-1.5 text-[8px] text-[#dbdbdb]">
      06:58:04 UTC+1
    </div>
    <div className="flex h-[23px] shrink-0 items-center justify-end gap-2.5 pr-1.5 text-[#a0a0a0]">
      <ChevronUp className="size-3" strokeWidth={1.6} />
      <Maximize className="size-3" strokeWidth={1.6} />
    </div>
    <AdCard />
  </section>
);

const AdCard = () => (
  <div className="absolute bottom-2 left-[5px] h-[105px] w-[274px] rounded-md bg-[#1f1f1f] pt-2.5 pl-2.5 text-[#d8d8d8] shadow-lg">
    <h3 className="text-[10px] leading-3">Trade CFDs 24/5 on 60+ US stocks</h3>
    <p className="mt-1.5 text-[8px] leading-[11px]">
      Connect your account with CMC Markets and trade
      <br />
      around-the-clock on popular US shares, including
      <br />
      the Mag 7.
    </p>
    <button className="mt-1 h-5 w-[101px] rounded bg-white text-[9px] text-[#1a1a1a]">Open a demo account</button>
    <p className="mt-1.5 text-[9px] leading-3 font-bold">67% of retail CFD accounts lose money.</p>
    <div className="absolute top-2 right-1 flex h-[54px] w-[56px] flex-col items-center justify-center bg-[#14152a] text-white">
      <svg viewBox="0 0 48 18" className="h-[18px] w-12" fill="none" stroke="#fff" strokeWidth="4">
        <path d="M14 4.500A6.500 6.500 0 1 0 14 13.500M47 4.500A6.500 6.500 0 1 0 47 13.500" />
        <path d="M18 1v16M24 3v14M30 1v16" strokeWidth="3.200" />
      </svg>
      <span className="mt-0.5 font-['Liberation_Sans',sans-serif] text-[9px] leading-[10px]">MARKETS</span>
    </div>
    <button aria-label="Close ad" className="absolute top-0.5 right-0.5 flex size-3 items-center justify-center bg-[#2c2c2c]">
      <X className="size-[10px]" />
    </button>
    <span className="absolute right-0.5 bottom-0.5 rounded-xs bg-[#404040] px-1 text-[7px] leading-[9px] text-[#a0a0a0]">AD</span>
  </div>
);

const quotes = [
  { s: "SPX", dot: true, last: "6,671.07", chg: "26.77", pct: "0.40%", logo: "500", bg: "bg-[#c8103f]" },
  { s: "BTC.D", last: "59.52", chg: "−0.02", pct: "−0.03%", logo: "B", bg: "bg-[#e8902a]" },
  { s: "TOTAL2", last: "1.51 T", chg: "3.83 B", pct: "0.26%", logo: "◎", bg: "bg-[#3458dd]" },
  { s: "XAUUSD", last: "4,207.", tail: "70", chg: "0.65", pct: "0.02%", logo: "▲", bg: "bg-[#c99a1c]", flag: true },
  { s: "COIN", dot: true, last: "336.30", chg: "−5.25", pct: "−1.54%", logo: "C", bg: "bg-[#0b55f0]" },
  { s: "XAGUSD", last: "52.6", tail: "437", chg: "−0.399", pct: "−0.75%", logo: "▲", bg: "bg-[#a3a3a8]" },
  { s: "GLEN", delayed: true, dot: true, last: "353.25", chg: "−0.15", pct: "−0.04%", logo: "G", bg: "bg-[#1c1c1c]" },
  { s: "AI", dot: true, last: "19.27", chg: "0.28", pct: "1.47%", logo: "≡", bg: "bg-[#1c1c1c]" },
  { s: "USOIL", last: "58.", tailUp: "81", chg: "0.05", pct: "0.09%", logo: "●", bg: "bg-[#1c1c1c]" },
  { s: "US500", last: "6,675.", tail: "2", chg: "2.8", pct: "0.04%", logo: "500", bg: "bg-[#c8103f]" },
  { s: "USDJPY", last: "", tailUp: "151.075", chg: "0.040", pct: "0.03%", logo: "●", bg: "bg-[#3f6fc4]" },
  { s: "DXY", last: "98.58", tailUp: "3", chg: "−0.082", pct: "−0.08%", logo: "$", bg: "bg-[#159468]", selected: true },
  { s: "HUT", dot: true, last: "53.91", chg: "3.96", pct: "7.94%", logo: "8", bg: "bg-[#1c1c1c]" },
  { s: "CLSK", dot: true, last: "23.20", chg: "1.22", pct: "5.55%", logo: "✦", bg: "bg-[#2383ae]" },
];

const Flag = ({ className }) => (
  <svg viewBox="0 0 6 7" className={`absolute left-0 h-[7px] w-1.5 ${className}`} fill="currentColor">
    <path d="M0 0h6L4.500 3.500 6 7H0z" />
  </svg>
);

const Watchlist = () => (
  <div className="border-b-2 border-[#2c2c2e] pb-0.5 text-[#d6d6d6]">
    <div className="flex h-7 items-center pl-[9px] text-[9px] font-bold">
      Watchlist
      <ChevronDown className="ml-1 size-2" />
      <Plus className="ml-auto size-3 text-[#b5b5b5]" strokeWidth={1.5} />
      <svg viewBox="0 0 14 14" className="ml-2.5 size-[13px] text-[#b5b5b5]" fill="none" stroke="currentColor">
        <path d="M7 2a5.500 5.500 0 1 0 5.500 5.500H7zM9 1v4h4a4 4 0 0 0-4-4z" />
      </svg>
      <Dots className="mx-2.5" />
    </div>
    <table className="w-full table-fixed border-separate border-spacing-0 text-right text-[8px]">
      <colgroup>
        <col className="w-[54px]" />
        <col className="w-[34px]" />
        <col className="w-[30px]" />
        <col className="w-[37px]" />
      </colgroup>
      <thead>
        <tr className="h-[18px] text-[9px] leading-3 text-[#8a8a8a]">
          <th className="relative border-b border-[#2c2c2e] p-0 pl-[9px] text-left font-normal">
            <Flag className="top-[5px] text-[#4a4a4a]" />
            Symbol
          </th>
          <th className="border-b border-[#2c2c2e] p-0 pr-1 font-normal">Last</th>
          <th className="border-b border-[#2c2c2e] p-0 pr-0.5 font-normal">Chg</th>
          <th className="border-b border-[#2c2c2e] p-0 pr-[9px] font-normal">Chg%</th>
        </tr>
        <tr className="h-1">
          <td className="border-b border-[#1f1f1f] p-0" colSpan={4} />
        </tr>
      </thead>
      <tbody>
        {quotes.map((q) => {
          const edge = q.selected ? "border-y border-[#6a6a6a]" : "border-b border-[#1f1f1f]";
          const tone = q.chg.startsWith("−") ? "text-[#d62d54]" : "text-[#27b27e]";
          return (
            <tr key={q.s} className="h-[18px] leading-4 whitespace-nowrap">
              <td className={`relative p-0 pl-[9px] text-left ${edge} ${q.selected ? "rounded-l border-l pl-2" : ""}`}>
                {q.flag && <Flag className="top-[5px] text-[#f23b55]" />}
                <span className="flex items-center gap-[3px]">
                  <i
                    className={`flex size-[10px] shrink-0 items-center justify-center rounded-full font-bold text-white not-italic ${q.bg} ${
                      q.logo === "500" ? "text-[5px]" : "text-[7px]"
                    }`}
                  >
                    {q.logo}
                  </i>
                  <span>
                    {q.s}
                    {q.delayed && <sup className="ml-0.5 text-[6px] text-[#e09a1b]">D</sup>}
                    {q.dot && <span className="ml-0.5 text-[6px] text-[#9a9a9a]">●</span>}
                  </span>
                </span>
              </td>
              <td className={`p-0 ${edge}`}>
                {q.last}
                <span className="text-[#d62d54]">{q.tail}</span>
                <span className="text-[#27b27e]">{q.tailUp}</span>
              </td>
              <td className={`p-0 pr-px ${edge} ${tone}`}>{q.chg}</td>
              <td className={`p-0 pr-2 ${edge} ${tone} ${q.selected ? "rounded-r border-r" : ""}`}>{q.pct}</td>
            </tr>
          );
        })}
      </tbody>
    </table>
  </div>
);

const Dots = ({ className }) => (
  <svg viewBox="0 0 12 4" className={`h-1 w-3 text-[#b5b5b5] ${className}`} fill="none" stroke="currentColor" strokeWidth=".900">
    <circle cx="2" cy="2" r="1.200" />
    <circle cx="6" cy="2" r="1.200" />
    <circle cx="10" cy="2" r="1.200" />
  </svg>
);

const performance = [
  { value: "−0.27%", label: "1W", bg: "bg-[#2a1118]", tone: "text-[#e0304f]" },
  { value: "1.28%", label: "1M", bg: "bg-[#10261e]", tone: "text-[#27b27e]" },
  { value: "0.10%", label: "3M", bg: "bg-[#10211b]", tone: "text-[#27b27e]" },
  { value: "−0.66%", label: "6M", bg: "bg-[#2a1118]", tone: "text-[#e0304f]" },
  { value: "−9.16%", label: "YTD", bg: "bg-[#4d1622]", tone: "text-[#e0304f]" },
  { value: "−4.53%", label: "1Y", bg: "bg-[#2f121a]", tone: "text-[#e0304f]" },
];

const jagged = (str) => {
  const pts = toPoints(str);
  const out = [];
  pts.forEach(([x, y], i) => {
    out.push(`${x},${y}`);
    const next = pts[i + 1];
    if (!next) return;
    for (let k = 1; k < 6; k++) {
      const t = k / 6;
      out.push(`${x + (next[0] - x) * t},${y + (next[1] - y) * t + Math.sin((i * 6 + k) * 4.1) * 1.8}`);
    }
  });
  return out.join(" ");
};

const Details = () => (
  <div className="flex min-h-0 flex-1 flex-col overflow-hidden px-[9px] text-[#d6d6d6]">
    <div className="flex h-7 shrink-0 items-center">
      <DollarBadge className="mr-1.5 size-[14px] text-[10px]" />
      <b className="text-[9px]">DXY</b>
      <LayoutGrid className="ml-auto size-3 text-[#b5b5b5]" strokeWidth={1.5} />
      <SquarePen className="ml-2.5 size-[13px] text-[#b5b5b5]" strokeWidth={1.5} />
      <Dots className="ml-2.5" />
    </div>
    <div className="flex items-center gap-1 text-[8px] leading-[14px] whitespace-nowrap">
      <span className="font-semibold">U.S. Dollar Index</span>
      <ExternalLink className="size-2 text-[#8a8a8a]" /> · TVC
    </div>
    <p className="text-[8px] leading-3 text-[#8a8a8a]">Index&nbsp; •&nbsp; Cfd</p>
    <div className="mt-1.5 flex h-6 items-baseline text-[18px] leading-6 font-bold">
      98.58<span className="text-[#27b27e]">3</span>
      <span className="ml-1 text-[7px] leading-3 font-normal">USD</span>
    </div>
    <p className="mt-px text-[10px] leading-3 font-semibold text-[#d62d54]">−0.082&nbsp; −0.08%</p>
    <p className="flex items-center gap-1 pl-[3px] text-[9px] leading-[13px] text-[#27b27e]">
      <i className="size-1 rounded-full bg-[#27b27e]" />
      Market open
    </p>
    <a href="#news" className="mt-1.5 flex h-6 shrink-0 items-center rounded bg-[#2d2140] px-1.5 text-[8px] leading-[9px]">
      <Zap className="mr-1 size-[6px] fill-[#8a5bd6] text-[#8a5bd6]" />
      <span className="flex-1 whitespace-nowrap">
        31 minutes ago&nbsp;•&nbsp;Dollar
        <br />
        defensive as Sino-US trade...
      </span>
      <ChevronRight className="size-2" />
    </a>
    <h3 className="mt-3 text-[9px] leading-[14px] font-bold">Performance</h3>
    <div className="mt-[3px] grid grid-cols-3 gap-1 text-center">
      {performance.map((p) => (
        <div key={p.label} className={`flex h-6 flex-col justify-center rounded-sm ${p.bg}`}>
          <span className={`text-[9px] leading-[11px] ${p.tone}`}>{p.value}</span>
          <span className="text-[7px] leading-[9px] font-bold">{p.label}</span>
        </div>
      ))}
    </div>
    <h3 className="mt-3 text-[9px] leading-[14px] font-bold">Seasonals</h3>
    <svg viewBox="1106 637 137 56" preserveAspectRatio="xMidYMin slice" className="mt-0.5 h-14 w-full shrink-0" fill="none">
      <path d="M1127,638V693M1159,638V693M1192,638V693M1225,638V693" stroke="#4a4a4a" strokeDasharray="3 4" />
      <path d="M1106,669.500H1243" stroke="#9a9a9a" />
      <polyline
        points={jagged("1106,670 1113,676 1120,670 1127,662 1135,673 1142,680 1150,677 1157,668 1165,674 1171,671 1175,685 1184,673 1195,666 1204,657 1213,661 1222,669 1228,671 1234,680")}
        stroke="#c07a1e"
      />
      <polyline
        points={jagged("1106,671 1115,661 1122,664 1130,668 1138,658 1146,653 1154,657 1162,660 1170,656 1180,662 1188,669 1199,676 1206,669 1215,660 1222,652 1229,651 1234,644")}
        stroke="#22a848"
      />
      <polyline points={jagged("1106,669 1112,676 1120,674 1127,679 1131,688 1136,686 1141,696")} stroke="#3d7bf0" strokeWidth="1.600" />
    </svg>
  </div>
);

const RailButton = ({ label, active, children }) => (
  <button
    aria-label={label}
    className={`flex size-[21px] shrink-0 items-center justify-center rounded ${active ? "bg-[#3a3a3a]" : ""}`}
  >
    <svg viewBox="0 0 28 28" className="size-[18px]" fill="none" stroke="currentColor" strokeWidth="1.500">
      {children}
    </svg>
  </button>
);

const RightRail = () => (
  <nav className="flex w-7 shrink-0 flex-col items-center gap-1.5 border-l border-[#2c2c2e] pt-1 pb-[5px] text-[#b2b2b2]">
    <RailButton label="Watchlist" active>
      <path d="M5 4h18v20l-9-5-9 5zM9 9h10M9 13h10M9 17h10" />
    </RailButton>
    <RailButton label="Alerts">
      <path d="M14 5a10 10 0 1 0 .1 0zM14 9v7h-4M4 7l4-4M24 7l-4-4" />
    </RailButton>
    <button aria-label="Object tree" className="flex size-[21px] items-center justify-center">
      <Layers className="size-4" strokeWidth={1.3} />
    </button>
    <RailButton label="Chats">
      <path d="M4 4h16v13H10l-4 4v-4H4zM20 9h4v12h-1v4l-4-4h-6v-4" />
    </RailButton>
    <div className="mt-auto flex flex-col items-center gap-1.5">
      <RailButton label="Screeners">
        <path d="M14 3a11 11 0 1 0 .1 0zM19 9a7 7 0 1 0 2 5M14 14l8-8M14 12a2 2 0 1 0 .1 0z" />
      </RailButton>
      <button aria-label="Calendar" className="flex size-[21px] items-center justify-center">
        <Calendar className="size-4" strokeWidth={1.3} />
      </button>
      <button
        aria-label="Products"
        className="grid size-[21px] grid-cols-[3px_3px_3px] place-content-center gap-0.5 rounded-full bg-white"
      >
        {Array.from({ length: 9 }, (_, i) => (
          <i key={i} className="size-[3px] bg-[#111]" />
        ))}
      </button>
      <div className="h-px w-[21px] bg-[#333]" />
      <button aria-label="Feed" className="flex size-[21px] items-center justify-center">
        <Rss className="size-4" strokeWidth={1.3} />
      </button>
      <RailButton label="Help">
        <path d="M14 4a10 10 0 1 0 .1 0zM11 11c0-4 6-4 6 0 0 2-3 2-3 5M14 19v2M2 22h4M4 20v4M24 3v4M22 5h4" />
      </RailButton>
    </div>
  </nav>
);

const Taskbar = () => (
  <footer className="flex h-[27px] shrink-0 items-center bg-linear-to-r from-[#2d2f31] via-[#2c3234] to-[#3a3b3d] font-['Noto_Sans',sans-serif] text-white">
    <button aria-label="Start" className="flex w-8 justify-center">
      <FaWindows className="size-[11px]" />
    </button>
    <label className="flex h-full w-48 items-center bg-[#f1f1f2] pl-2">
      <Search className="size-3 -scale-x-100 text-[#333]" strokeWidth={1.6} />
      <input
        aria-label="Search"
        placeholder="Type here to search"
        className="ml-1.5 w-[117px] text-[10px] text-[#333] outline-none placeholder:text-[#4a4a4a]"
      />
      <svg viewBox="0 0 40 18" className="h-[18px] w-10">
        <path d="M16 1c1.200 5 2.500 6.500 7.500 8-5 1.500-6.300 3-7.500 8-1.200-5-2.500-6.500-7.500-8 5-1.500 6.300-3 7.500-8z" fill="#f6c12e" />
        <path d="M31 8c.5 2.300 1 2.800 3.300 3.500C32 12.200 31.500 12.700 31 15c-.5-2.300-1-2.800-3.300-3.500C30 10.800 30.500 10.300 31 8z" fill="#f3b62a" />
        <path d="M3 12v5M.500 14.500h5" stroke="#2aa3e0" strokeWidth="2" />
        <circle cx="27" cy="3" r="1.400" fill="#e0563f" />
        <circle cx="38" cy="16" r="1.200" fill="#7fb540" />
      </svg>
    </label>
    <div className="ml-0.5 flex h-full items-center">
      <button aria-label="Brave" className="flex w-8 justify-center">
        <svg viewBox="0 0 16 16" className="size-4">
          <path d="M4 1h8l2 2.500-1 7-5 5-5-5-1-7z" fill="#f04a26" />
          <path d="M5 4l3 .500 3-.500 1.500 2-1.500 3.500L8 12 5 9.500 3.500 6z" fill="#fff" />
          <path d="M5.500 6.500l2 .700v2M10.500 6.500l-2 .700v2" stroke="#f04a26" fill="none" />
        </svg>
      </button>
      <button aria-label="Audio router" className="flex w-8 justify-center">
        <svg viewBox="0 0 16 16" className="size-[15px]">
          <rect width="16" height="16" rx="2" fill="#0a0a0a" />
          <path d="M4 12V9a4 4 0 1 1 8 0 3 3 0 0 1-3 3H4M6 8h6" stroke="#fff" strokeWidth="1.500" fill="none" />
        </svg>
      </button>
      <button aria-label="Binance" className="flex w-[34px] justify-center">
        <svg viewBox="0 0 16 16" className="size-[15px]">
          <rect width="16" height="16" rx="2" fill="#111" />
          <path d="M4.500 6.500L8 3l3.500 3.500M4.500 9.500L8 13l3.500-3.500M8 6.300L9.700 8 8 9.700 6.300 8zM3 7l1 1-1 1M13 7l-1 1 1 1" stroke="#f0b90b" strokeWidth="1.400" fill="none" />
        </svg>
      </button>
      <button aria-label="Firefox" className="flex h-full w-8 items-center justify-center border-b border-[#76b9ed] bg-[#55595c]">
        <svg viewBox="0 0 16 16" className="size-4">
          <path d="M8 1c1 2 3 1 5 4 2 4 1 10-5 10S0 10 1.500 5L3 3l1.500 1.500C5.500 4 7 3 8 1z" fill="#f7642c" />
          <path d="M11 3c3 2 4 6 2 9-1 1.500-3 2.500-5 2.500 4-1 5-4 4-7z" fill="#ffcb32" />
          <path d="M1.500 7C2 13 8 15.500 12 12 8 13 3 12 1.500 7z" fill="#e8276a" />
          <circle cx="8" cy="8.500" r="3" fill="#7343d8" />
        </svg>
      </button>
      <button aria-label="File Explorer" className="flex w-[33px] justify-center">
        <svg viewBox="0 0 16 14" className="h-[14px] w-4">
          <path d="M1 1.500h5l1.500 2H15V13H1z" fill="#f0c04a" />
          <path d="M1 5h14v8H1z" fill="#fbdb7c" />
          <path d="M4 13V8h8v5h-2.500v-2.500h-3V13z" fill="#3c97d8" />
        </svg>
      </button>
      <button aria-label="OBS Studio" className="flex h-full w-8 items-center justify-center border-b border-[#76b9ed]">
        <svg viewBox="0 0 16 16" className="size-4">
          <circle cx="7.500" cy="7.500" r="6.800" fill="#1f1f22" stroke="#c8c8c8" />
          <path d="M7.500 7.500C4 7 4 3.500 6.500 2.500M7.500 7.500c3-2 5 0 5 2M7.500 7.500c1 3-1.500 5-3.500 4.500" stroke="#c8c8c8" fill="none" />
          <circle cx="12" cy="12" r="3.500" fill="#f01414" />
        </svg>
      </button>
    </div>
    <div className="ml-auto flex items-center gap-[5px]">
      <ChevronUp className="size-[10px]" />
      <svg viewBox="0 0 10 12" className="h-3 w-[10px]" fill="none" stroke="#fff">
        <path d="M3.500 1h3v6h-3zM1.500 5v4h7V5M5 9v2.500" />
      </svg>
      <svg viewBox="0 0 12 12" className="size-[11px]" fill="none" stroke="#fff">
        <path d="M1 3h10v6H1zM8 9v2H5" />
      </svg>
      <svg viewBox="0 0 12 12" className="size-[11px]" fill="none" stroke="#fff">
        <path d="M1 11A10 10 0 0 1 11 1M4 11a7 7 0 0 1 7-7M7 11a4 4 0 0 1 4-4" />
      </svg>
      <svg viewBox="0 0 12 12" className="size-[11px]" fill="none" stroke="#fff">
        <path d="M1 4.500h2L6 2v8L3 7.500H1zM8 4a3 3 0 0 1 0 4M9.500 2a6 6 0 0 1 0 8" />
      </svg>
      <div className="w-12 text-center text-[8px] leading-3">
        06:58
        <br />
        16/10/2025
      </div>
      <div className="relative mr-3.5 ml-0.5">
        <svg viewBox="0 0 12 12" className="size-3" fill="none" stroke="#fff">
          <path d="M1 1h10v8H7l-3 2.500V9H1z" />
        </svg>
        <span className="absolute top-1 left-2 flex size-2 items-center justify-center rounded-full bg-[#222] text-[7px]">2</span>
      </div>
    </div>
  </footer>
);

const App = () => (
  <div className="flex h-screen flex-col overflow-hidden bg-[#0e0e0e] font-['Lato',sans-serif]">
    <BrowserBar />
    <TopToolbar />
    <main className="flex min-h-0 flex-1">
      <DrawingToolbar />
      <Chart />
      <aside className="flex w-[158px] shrink-0 flex-col border-l-3 border-[#2c2c2e] bg-[#0e0e0e]">
        <Watchlist />
        <Details />
      </aside>
      <RightRail />
    </main>
    <Taskbar />
  </div>
);

export default App;
